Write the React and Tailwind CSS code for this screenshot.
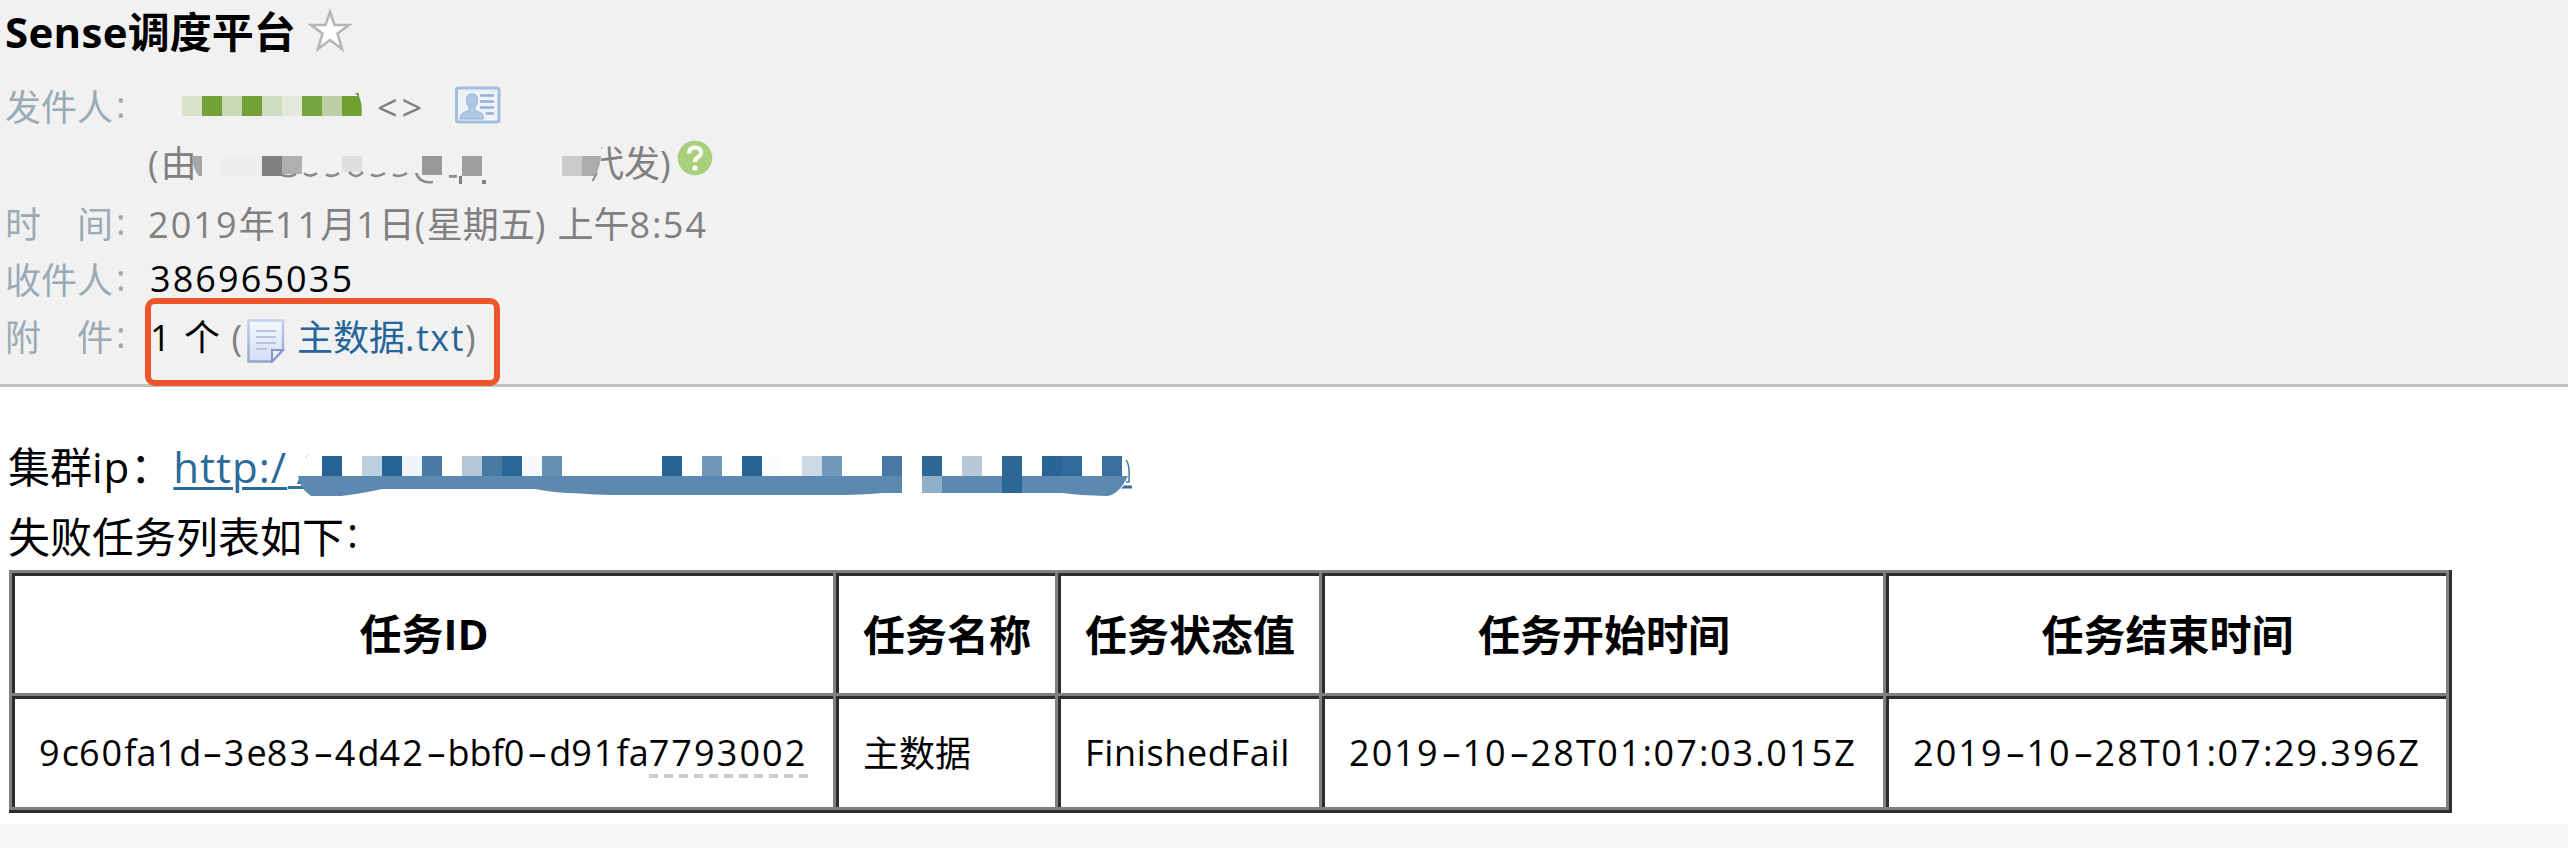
import { Fragment } from "react";

const LATIN = "font-['Open_Sans','Noto_Sans',sans-serif]";

// Splits mixed text so digits, letters, colons and hyphens each get their own spacing.
function Mixed({ text, latin = "tracking-[0px]" }) {
  const runs = text.match(/[\u2E80-\uFFFF]+|-|\d+|[^\u2E80-\uFFFF\d-]+/g) || [];
  return (
    <span className="whitespace-pre">
      {runs.map((run, i) => {
        if (run === "-")
          return (
            <span key={i} className={`${LATIN} inline-block w-[22.7px] scale-x-[1.75] text-center`}>
              -
            </span>
          );
        if (/[\u2E80-\uFFFF]/.test(run)) return <Fragment key={i}>{run}</Fragment>;
        return (
          <span key={i} className={`${LATIN} ${/\d/.test(run) ? "tracking-[2.1px]" : latin}`}>
            {run}
          </span>
        );
      })}
    </span>
  );
}

function RaisedColon() {
  return <span className={`${LATIN} inline-block translate-x-[3px] -translate-y-[3px]`}>:</span>;
}

function Row({ label, height, children }) {
  return (
    <div className={`flex items-center ${height}`}>
      <div className="w-[148px] shrink-0 pl-[5px] text-[#9aabb6]">
        {label}
        <RaisedColon />
      </div>
      {children}
    </div>
  );
}

function Star() {
  return (
    <svg width="44" height="44" viewBox="0 0 44 44" className="mb-[2px] ml-[12px]">
      <path
        d="M22 4 L26.500 17 L41 17 L29.500 25.500 L34 41 L22 32 L10 41 L14.500 25.500 L3 17 L17.500 17 Z"
        fill="#fff"
        stroke="#b4b6ba"
        strokeWidth="2.6"
      />
    </svg>
  );
}

const GREEN = ["#d9e2cc", "#73a137", "#cbd8b8", "#73a137", "#d0dcbf", "#e3e9dc", "#78a43f", "#bdd0a5"];

function SenderMask() {
  return (
    <svg width="182" height="26" viewBox="0 0 182 26" className="mb-[2px] ml-[34px]">
      {GREEN.map((c, i) => (
        <rect key={i} x={i * 20} y="4" width="20" height="20" fill={c} />
      ))}
      <path d="M160 4 H176 L173 1 H177 V4 Q181 14 179.500 24 H160 Z" fill="#6fa032" />
    </svg>
  );
}

function CardIcon() {
  return (
    <svg width="46" height="38" viewBox="0 0 46 38" className="mb-[3px] ml-[29px]">
      <rect x="1.500" y="2" width="42.500" height="34" rx="2" fill="#edf2f8" stroke="#a3bedd" strokeWidth="3" />
      <path
        d="M5 33 Q5 27.500 10 26 L14 24.500 V21.500 Q11.500 18.500 11.500 13.500 Q11.500 8 17 8 Q22.500 8 22.500 13.500 Q22.500 18.500 20 21.500 V24.500 L24 26 Q28.500 27.500 28.500 33 Z"
        fill="#b0c8e2"
        stroke="#94b1d2"
        strokeWidth="1"
      />
      <path d="M25 9.500 H39 M25 15.500 H39 M25 21.500 H39 M30.500 27.500 H39" stroke="#93afd2" strokeWidth="2.600" />
    </svg>
  );
}

function AddressMask() {
  return (
    <svg width="410" height="46" viewBox="192 140 410 46" className="relative z-10 shrink-0">
      <rect x="588" y="140" width="13" height="46" fill="#f1f1f1" />
      <path d="M192 156 H202 V176 H199 Q193 170 192 156 Z" fill="#a6a6a6" />
      <rect x="222" y="156" width="40" height="20" fill="#eeeeee" />
      <rect x="262" y="156" width="20" height="20" fill="#808080" />
      <rect x="282" y="156" width="20" height="18" fill="#b0b0b0" />
      <rect x="342" y="156" width="20" height="16" fill="#dfdfdf" />
      <rect x="422" y="156" width="20" height="19" fill="#999999" />
      <rect x="462" y="156" width="20" height="20" fill="#9f9f9f" />
      <rect x="562" y="156" width="20" height="20" fill="#cbcbcb" />
      <path d="M582 156 H601 Q600 168 595 176 H582 Z" fill="#adadad" />
      <path d="M597 173 L592.500 181" stroke="#8a8a8a" strokeWidth="2" />
      <path
        d="M282 175 Q290 178 296 174 M304 173.500 Q311 178 317 173 M326 174.500 Q333 178 339 173 M349 172 Q356 180 363 172 M371 174.500 Q378 178 385 173 M393 174.500 Q400 178 407 173 M416 173 Q420 184 433 182 M449 176 Q453 177 457 176"
        fill="none"
        stroke="#8a8a8a"
        strokeWidth="2.600"
      />
      <path d="M459 176 H462 V184 H459 Z M482 180 H486 V184 H482 Z" fill="#808080" />
    </svg>
  );
}

function HelpIcon() {
  return (
    <svg width="36" height="36" viewBox="0 0 36 36" className="mb-[10px] ml-[7px]">
      <circle cx="18" cy="18" r="17.300" fill="#a8d07a" />
      <path d="M12 13.500 Q12 7.500 18 7.500 Q24 7.500 24 12.500 Q24 15.500 20.500 17.500 Q18 19 18 22" fill="none" stroke="#fff" strokeWidth="4" />
      <circle cx="18" cy="28" r="2.600" fill="#fff" />
    </svg>
  );
}

function FileIcon() {
  return (
    <svg width="38" height="44" viewBox="0 0 38 44" className="ml-[4px] mt-[10px]">
      <defs>
        <linearGradient id="page" x1="0" y1="0" x2="0" y2="1">
          <stop offset="0" stopColor="#f5f9ff" />
          <stop offset="1" stopColor="#d2ddf4" />
        </linearGradient>
        <linearGradient id="edge" x1="0" y1="0" x2="0" y2="1">
          <stop offset="0" stopColor="#c5d0ee" />
          <stop offset="1" stopColor="#93a4d2" />
        </linearGradient>
      </defs>
      <path d="M1.500 1.500 H36 V31 L25 42.500 H1.500 Z" fill="url(#page)" stroke="url(#edge)" strokeWidth="2.500" />
      <path d="M25 42.500 V31 H36 Z" fill="#e8eefc" stroke="#8496c8" strokeWidth="2" />
      <path d="M9 12 H29 M9 18 H29 M9 24 H29 M9 30 H20" stroke="#b9c3dc" strokeWidth="2" />
    </svg>
  );
}

const BLUE = [
  [322, "#276394"], [362, "#bccfdd"], [382, "#276394"], [402, "#eff4f8"], [422, "#497aa4"],
  [462, "#b4c8d8"], [482, "#497aa4"], [502, "#296798"], [522, "#f7fafc"], [542, "#6490b4"],
  [662, "#276394"], [702, "#6d96b7"], [742, "#276394"], [762, "#fafcfe"], [802, "#ccdae5"],
  [822, "#7299b8"], [882, "#497aa4"], [922, "#2d6795"], [962, "#b5c9d9"], [1002, "#2d6795"],
  [1042, "#296594"], [1062, "#31699a"], [1102, "#3a70a0"],
];

function LinkMask() {
  return (
    <svg width="846" height="52" viewBox="288 448 846 52" className="shrink-0">
      <path d="M288 486 H304 V489 H288 Z M297 484 L300 476 L302 484 Z" fill="#34719f" />
      <path d="M305 458 L308 455" stroke="#c5cdd4" strokeWidth="1" />
      <path
        d="M298 476 H902 V493 H882 Q860 495 835 495 H628 Q600 495 580 493.500 Q555 493 535 489 H382 Q360 494 341 496 H311 Q300 489 298 476 Z"
        fill="#5c89af"
      />
      <path d="M942 476 H1128 Q1118 496 1106 496 Q1084 496 1062 493 H942 Z" fill="#5c89af" />
      <rect x="922" y="476" width="20" height="17" fill="#92afc8" />
      {BLUE.map(([x, c]) => (
        <rect key={x} x={x} y="456" width="20" height="20" fill={c} />
      ))}
      <rect x="1002" y="476" width="20" height="17" fill="#2d6795" />
      <path d="M1126 460 Q1130 464 1129 480 V482 H1126" fill="none" stroke="#4a7fa9" strokeWidth="1.600" />
      <path d="M1124 485.500 H1132 V488.500 H1121 Z" fill="#34719f" />
    </svg>
  );
}

const HEADS = ["任务ID", "任务名称", "任务状态值", "任务开始时间", "任务结束时间"];

function Cell({ children, className = "" }) {
  return (
    <div className="border-l-[3px] border-t-[3px] border-[#808080]">
      <div className={`flex h-full items-center border-l-[3px] border-t-[3px] border-[#2d2d2d] ${className}`}>
        {children}
      </div>
    </div>
  );
}

function TaskTable() {
  return (
    <div className="ml-[9px] w-[2443px] border-b-[3px] border-r-[3px] border-[#2d2d2d]">
      <div className="grid grid-cols-[824px_222px_264px_564px_563px] grid-rows-[123px_114px] border-b-[3px] border-r-[3px] border-[#808080]">
        {HEADS.map((h) => (
          <Cell key={h} className="justify-center pb-[3px] text-[42px] font-bold">
            <Mixed text={h} />
          </Cell>
        ))}
        <Cell className="pb-[4px] pl-[24px]">
          <Mixed text="9c60fa1d-3e83-4d42-bbf0-d91fa" />
          <span className="relative">
            <Mixed text="7793002" />
            <span className="absolute left-0 top-[42px] h-[4px] w-[160px] bg-[repeating-linear-gradient(90deg,#cccccc_0_9px,transparent_9px_15px)]" />
          </span>
        </Cell>
        <Cell className="pb-[4px] pl-[24px]"><Mixed text="主数据" /></Cell>
        <Cell className="pb-[4px] pl-[24px]"><Mixed text="FinishedFail" latin="tracking-[0.65px]" /></Cell>
        <Cell className="pb-[4px] pl-[24px]"><Mixed text="2019-10-28T01:07:03.015Z" latin="tracking-[1.5px]" /></Cell>
        <Cell className="pb-[4px] pl-[24px]"><Mixed text="2019-10-28T01:07:29.396Z" latin="tracking-[1.5px]" /></Cell>
      </div>
    </div>
  );
}

export default function App() {
  return (
    <div className="flex h-[848px] w-[2568px] flex-col overflow-hidden bg-white font-['Noto_Sans_CJK_SC',sans-serif] text-[36px] leading-none text-black">
      <header className="relative flex h-[387px] shrink-0 flex-col border-b-[3px] border-[#c0c0c0] bg-[#f1f1f1]">
        <div className="flex h-[62px] items-center pl-[5px] text-[42px] font-bold">
          <Mixed text="Sense调度平台" latin="tracking-[0.3px]" />
          <Star />
        </div>
        <Row label="发件人" height="h-[78px] pt-[10px]">
          <SenderMask />
          <span className="ml-[13px] text-[#808080]"><Mixed text="<>" latin="tracking-[4px]" /></span>
          <CardIcon />
        </Row>
        <div className="flex h-[46px] items-center pl-[148px] text-[#808080]">
          <div className="w-[44px] shrink-0 pb-[2px]"><Mixed text="(由" latin="tracking-[2px]" /></div>
          <AddressMask />
          <div className="-ml-[14px] pb-[2px]"><Mixed text="代发)" latin="-tracking-[1px]" /></div>
          <HelpIcon />
        </div>
        <Row label="时　间" height="h-[74px]">
          <span className="text-[#808080]"><Mixed text="2019年11月1日(星期五) 上午8:54" latin="tracking-[1.3px]" /></span>
        </Row>
        <Row label="收件人" height="h-[38px]">
          <span className="mb-[3px] ml-[2px]"><Mixed text="386965035" /></span>
        </Row>
        <Row label="附　件" height="h-[76px]">
          <span className="ml-[2px]"><Mixed text="1 个 " latin="tracking-[2px]" /></span>
          <span className="text-[#808080]"><Mixed text="(" latin="tracking-[1px]" /></span>
          <FileIcon />
          <span className="ml-[12px] text-[#26659a]"><Mixed text="主数据.txt" latin="tracking-[1.5px]" /></span>
          <span className="text-[#808080]"><Mixed text=")" /></span>
        </Row>
        <div className="absolute left-[145px] top-[298px] h-[88px] w-[355px] rounded-[10px] border-[6px] border-[#ec5429]" />
      </header>
      <main className="flex grow flex-col text-[36px]">
        <div className="mt-[47px] flex h-[66px] items-center pl-[8px] text-[42px]">
          <div className="flex pb-[2px]">
            <Mixed text="集群ip：" latin="tracking-[1px]" />
            <span className="w-[116px] pl-px text-[#2c6a9c] underline decoration-[3px] underline-offset-[4px]"><Mixed text="http:/" latin="tracking-[1px]" /></span>
          </div>
          <div className="pt-[14px]"><LinkMask /></div>
        </div>
        <div className="mb-px mt-[2px] flex h-[67px] items-center pb-[2px] pl-[8px] text-[42px]">
          <Mixed text="失败任务列表如下" />
          <RaisedColon />
        </div>
        <TaskTable />
      </main>
      <footer className="h-[24px] shrink-0 bg-[#f7f7f7]" />
    </div>
  );
}
